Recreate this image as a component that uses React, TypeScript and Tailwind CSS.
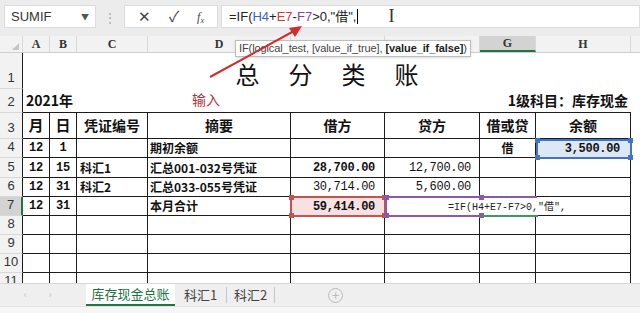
import React from "react";

const cols = [27, 27, 71, 143, 94, 95, 56, 95];
// E and F header letters are hidden under the function tooltip
const letters = ["A", "B", "C", "D", "", "", "G", "H"];
const line = "border-[#1c1c1c]";

type Cell = { t?: string; cls?: string };

const rows: { n: number; h: number; cells: Cell[] }[] = [
  {
    n: 3,
    h: 26,
    cells: [
      { t: "月", cls: "justify-center text-[15px] font-bold" },
      { t: "日", cls: "justify-center text-[15px] font-bold" },
      { t: "凭证编号", cls: "justify-center text-[14px] font-bold" },
      { t: "摘要", cls: "justify-center text-[14px] font-bold" },
      { t: "借方", cls: "justify-center text-[14px] font-bold" },
      { t: "贷方", cls: "justify-center text-[14px] font-bold" },
      { t: "借或贷", cls: "justify-center text-[14px] font-bold" },
      { t: "余额", cls: "justify-center text-[14px] font-bold" },
    ],
  },
  {
    n: 4,
    h: 19,
    cells: [
      { t: "12", cls: "justify-center num font-bold" },
      { t: "1", cls: "justify-center num font-bold" },
      {},
      { t: "期初余额", cls: "pl-[2px] text-[12px] font-bold" },
      {},
      {},
      { t: "借", cls: "justify-center text-[12px] font-bold" },
      { t: "3,500.00", cls: "justify-end pr-[10px] num font-bold" },
    ],
  },
  {
    n: 5,
    h: 20,
    cells: [
      { t: "12", cls: "justify-center num font-bold" },
      { t: "15", cls: "justify-center num font-bold" },
      { t: "科汇1", cls: "pl-[3px] text-[12px] font-bold" },
      { t: "汇总001-032号凭证", cls: "pl-[2px] text-[12px] font-bold" },
      { t: "28,700.00", cls: "justify-end pr-[9px] num font-bold" },
      { t: "12,700.00", cls: "justify-end pr-[8px] num" },
      {},
      {},
    ],
  },
  {
    n: 6,
    h: 19,
    cells: [
      { t: "12", cls: "justify-center num font-bold" },
      { t: "31", cls: "justify-center num font-bold" },
      { t: "科汇2", cls: "pl-[3px] text-[12px] font-bold" },
      { t: "汇总033-055号凭证", cls: "pl-[2px] text-[12px] font-bold" },
      { t: "30,714.00", cls: "justify-end pr-[9px] num" },
      { t: "5,600.00", cls: "justify-end pr-[8px] num" },
      {},
      {},
    ],
  },
  {
    n: 7,
    h: 19,
    cells: [
      { t: "12", cls: "justify-center num font-bold" },
      { t: "31", cls: "justify-center num font-bold" },
      {},
      { t: "本月合计", cls: "pl-[2px] text-[12px] font-bold" },
      {},
      {},
      {},
      {},
    ],
  },
  { n: 8, h: 19, cells: Array(8).fill({}) },
  { n: 9, h: 19, cells: Array(8).fill({}) },
  { n: 10, h: 19, cells: Array(8).fill({}) },
  { n: 11, h: 19, cells: Array(8).fill({}) },
];

const cjk = { fontFamily: '"Noto Sans CJK SC", "Noto Sans", sans-serif' };
const mono = { fontFamily: '"Liberation Mono", "Noto Sans CJK SC", monospace' };

function RowHead({ n, h, active }: { n: number | string; h: number; active?: boolean }) {
  return (
    <div
      className={`w-[23px] shrink-0 flex items-end justify-center text-[13px] text-[#333] pb-[1px] border-b border-[#d8d8d8] ${
        active ? "bg-[#d3d3d3] border-r-2 border-r-[#217346]" : "bg-[#f2f2f2] border-r border-r-[#1c1c1c]"
      }`}
      style={{ height: h, fontFamily: '"Liberation Sans", sans-serif' }}
    >
      {n}
    </div>
  );
}

export default function App() {
  return (
    <div className="w-[640px] h-[313px] relative overflow-hidden bg-white text-[#111]" style={cjk}>
      <style>{`.num{font-family:"Liberation Mono",monospace;font-size:12px;letter-spacing:-0.3px}`}</style>

      {/* formula bar */}
      <div className="h-[36px] bg-[#ececec] flex items-start pt-[5px] gap-[3px] pl-[4px]">
        <div className="w-[92px] h-[23px] bg-white border border-[#dcdcdc] flex items-center justify-between px-[6px]">
          <span className="text-[13px] text-[#333]" style={{ fontFamily: '"Liberation Sans", sans-serif' }}>SUMIF</span>
          <span className="text-[8px] text-[#555]">▼</span>
        </div>
        <div className="w-[22px] h-[23px] flex items-center justify-center text-[#aaa] text-[12px]">⋮</div>
        <div className="w-[94px] h-[23px] bg-white border border-[#dcdcdc] flex items-center justify-around px-[4px] text-[#444]">
          <span className="text-[15px]">✕</span>
          <span className="text-[15px]">✓</span>
          <span className="text-[12px] italic" style={{ fontFamily: '"Liberation Serif", serif' }}>
            f<sub className="text-[8px]">x</sub>
          </span>
        </div>
        <div className="flex-1 h-[23px] bg-white border border-[#dcdcdc] flex items-center pl-[7px] text-[13px] text-[#222]" style={{ fontFamily: '"Liberation Sans", "Noto Sans CJK SC", sans-serif' }}>
          <span>=IF(</span>
          <span className="text-[#3b62c2]">H4</span>
          <span>+</span>
          <span className="text-[#d23b3b]">E7</span>
          <span>-</span>
          <span className="text-[#8045a5]">F7</span>
          <span>&gt;0,"借",</span>
          <span className="w-px h-[15px] bg-black ml-[1px]" />
          <span className="ml-[30px] text-[18px] text-[#333] font-light" style={{ fontFamily: '"Liberation Serif", serif' }}>I</span>
        </div>
      </div>

      {/* column headers */}
      <div className="flex h-[17px] bg-[#f2f2f2] border-b border-[#cfcfcf]">
        <div className="w-[23px] shrink-0 border-r border-[#d8d8d8] flex items-end justify-end pr-[3px] pb-[2px]">
          <span className="w-0 h-0 border-l-[7px] border-l-transparent border-b-[7px] border-b-[#c4c4c4]" />
        </div>
        {letters.map((l, i) => (
          <div
            key={i}
            className={`shrink-0 flex items-center justify-center text-[12px] text-[#333] font-bold border-r border-[#d8d8d8] ${
              l === "G" ? "bg-[#d3d3d3] border-b-2 border-b-[#217346]" : ""
            }`}
            style={{ width: cols[i], fontFamily: '"Liberation Serif", serif' }}
          >
            {l}
          </div>
        ))}
        <div className="flex-1" />
      </div>

      {/* row 1 */}
      <div className="flex">
        <RowHead n={1} h={36} />
        <div className="w-[608px] h-[36px] flex items-start justify-center pt-[3px] pl-[29px] text-[24px] tracking-[29px]">
          总分类账
        </div>
      </div>

      {/* row 2 */}
      <div className="flex">
        <RowHead n={2} h={24} />
        <div className={`w-[608px] h-[24px] flex items-end justify-between px-[3px] pb-[1px] text-[14px] font-bold border-b ${line}`}>
          <span>2021年</span>
          <span>1级科目：库存现金</span>
        </div>
      </div>

      {/* table rows */}
      {rows.map((r) => (
        <div key={r.n} className="flex">
          <RowHead n={r.n} h={r.h} active={r.n === 7} />
          {r.cells.map((c, i) => (
            <div
              key={i}
              className={`shrink-0 flex items-center border-r border-b ${line} ${c.cls ?? ""}`}
              style={{ width: cols[i], height: r.h }}
            >
              {c.t}
            </div>
          ))}
        </div>
      ))}

      {/* highlighted references */}
      <div className="absolute left-[536px] top-[139px] w-[96px] h-[20px] border-2 border-[#4472c4] bg-[#dde8f7] flex items-center justify-end pr-[10px] num font-bold">
        3,500.00
        <span className="absolute -left-[3px] -top-[3px] w-[5px] h-[5px] bg-[#4472c4]" />
        <span className="absolute -right-[3px] -top-[3px] w-[5px] h-[5px] bg-[#4472c4]" />
        <span className="absolute -left-[3px] -bottom-[3px] w-[5px] h-[5px] bg-[#4472c4]" />
        <span className="absolute -right-[3px] -bottom-[3px] w-[5px] h-[5px] bg-[#4472c4]" />
      </div>
      <div className="absolute left-[290px] top-[196px] w-[96px] h-[21px] border-2 border-[#c8504d] bg-[#f7e1e1] flex items-center justify-end pr-[9px] num font-bold">
        59,414.00
        <span className="absolute -left-[3px] -top-[3px] w-[5px] h-[5px] bg-[#c8504d]" />
        <span className="absolute -right-[3px] -top-[3px] w-[5px] h-[5px] bg-[#c8504d]" />
        <span className="absolute -left-[3px] -bottom-[3px] w-[5px] h-[5px] bg-[#c8504d]" />
        <span className="absolute -right-[3px] -bottom-[3px] w-[5px] h-[5px] bg-[#c8504d]" />
      </div>
      <div className="absolute left-[385px] top-[196px] w-[152px] h-[21px] bg-white border-y-2 border-[#8a5aa8] border-l-2">
        <span className="absolute -left-[3px] -top-[3px] w-[5px] h-[5px] bg-[#8a5aa8]" />
        <span className="absolute left-[92px] -top-[3px] w-[5px] h-[5px] bg-[#8a5aa8]" />
        <span className="absolute -left-[3px] -bottom-[3px] w-[5px] h-[5px] bg-[#8a5aa8]" />
        <span className="absolute left-[92px] -bottom-[3px] w-[5px] h-[5px] bg-[#8a5aa8]" />
        <span className="absolute left-[95px] -bottom-[2px] w-[56px] h-[2px] bg-[#3d9a5a]" />
        <span className="absolute left-[61px] top-[2px] text-[10px] text-[#222] whitespace-nowrap" style={mono}>
          =IF(H4+E7-F7&gt;0,"借",
        </span>
      </div>

      {/* function tooltip */}
      <div
        className="absolute left-[235px] top-[40px] h-[17px] px-[3px] bg-white border border-[#bdbdbd] shadow-sm flex items-center text-[11px] text-[#444] whitespace-nowrap tracking-[-0.1px]"
        style={{ fontFamily: '"Liberation Sans", sans-serif' }}
      >
        IF(logical_test, [value_if_true], <b className="ml-[3px] text-[#222]">[value_if_false]</b>)
      </div>

      {/* annotation */}
      <svg className="absolute left-0 top-0 pointer-events-none" width="640" height="313">
        <line x1="210" y1="77" x2="294" y2="31" stroke="#d42b2b" strokeWidth="2" />
        <polygon points="302,26 289,28 295,37" fill="#d42b2b" />
      </svg>
      <div className="absolute left-[192px] top-[89px] text-[14px] text-[#b0343e]">输入</div>

      {/* sheet tabs */}
      <div className="absolute left-0 top-[283px] w-[640px] h-[30px] bg-[#efefef] border-t border-[#d6d6d6]">
        <div className="flex h-[22px] items-stretch text-[13px] text-[#444]">
          <div className="w-[86px] flex items-center pl-[24px] gap-[22px] text-[#bbb] text-[9px]">
            <span>‹</span>
            <span>›</span>
          </div>
          <div className="w-[89px] bg-white flex items-center justify-center text-[#217346] border-b-2 border-[#217346]">
            库存现金总账
          </div>
          <div className="w-[52px] flex items-center justify-center border-r border-[#c8c8c8] my-[3px]">科汇1</div>
          <div className="w-[48px] flex items-center justify-center border-r border-[#c8c8c8] my-[3px]">科汇2</div>
          <div className="w-[68px] flex items-center justify-end">
            <span className="w-[15px] h-[15px] rounded-full border border-[#bbb] text-[#bbb] text-[13px] leading-[12px] flex items-center justify-center">+</span>
          </div>
        </div>
        <div className="h-[8px] bg-[#f6f6f6] border-t border-[#e2e2e2]" />
      </div>
    </div>
  );
}
